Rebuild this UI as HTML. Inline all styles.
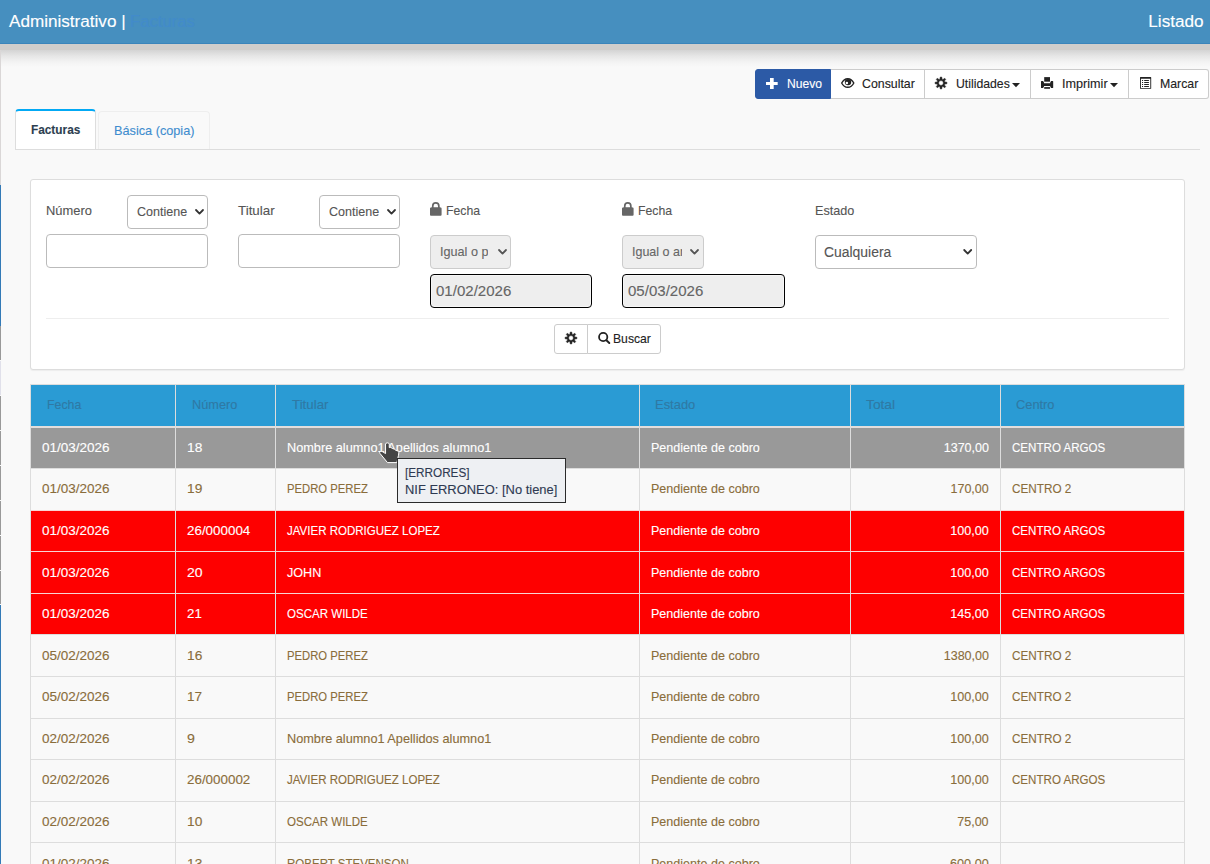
<!DOCTYPE html>
<html lang="es"><head>
<meta charset="utf-8">
<title>Administrativo | Facturas</title>
<style>
*{box-sizing:border-box;margin:0;padding:0}
html,body{width:1210px;height:864px;overflow:hidden}
body{font-family:"Liberation Sans",sans-serif;font-size:13px;color:#333;background:#f9f9f9;position:relative}
.a{position:absolute}
.t{position:absolute;white-space:nowrap;-webkit-text-stroke:0.12px currentColor}
svg{position:absolute;overflow:visible}
#topbar{left:0;top:0;width:1210px;height:44px;background:#468fbf;border-bottom:1px solid #3a84ba}
#strip{left:0;top:44px;width:1210px;height:6px;background:#cfcdcb}
#fade{left:1px;top:50px;width:1209px;height:17px;background:linear-gradient(#d4d4d4,#e6e6e6 35%,#f3f3f3 70%,#f9f9f9)}
.btn{position:absolute;top:69px;height:30px;background:#fff;border:1px solid #ccc;border-left:none}
#b1{left:755px;width:76px;background:#2c5aa6;border:1px solid #2c5aa6;border-radius:3px 0 0 3px}
#b2{left:831px;width:94px}
#b3{left:925px;width:106px}
#b4{left:1031px;width:98px}
#b5{left:1129px;width:80px;border-radius:0 3px 3px 0}
#tabline{left:15px;top:149px;width:1185px;height:1px;background:#ddd}
#tab1{left:15px;top:109px;width:81px;height:41px;background:#fff;border:1px solid #ddd;border-top:2px solid #03a9f4;border-bottom:1px solid #ddd;border-radius:4px 4px 0 0}
#tab2{left:98px;top:111px;width:112px;height:38px;border:1px solid #eee;border-bottom:none;border-radius:4px 4px 0 0}
#panel{left:30px;top:179px;width:1155px;height:191px;background:#fff;border:1px solid #ddd;border-radius:3px;box-shadow:0 1px 1px rgba(0,0,0,.05)}
.inp{position:absolute;height:34px;background:#fff;border:1px solid #bbb;border-radius:4px}
.dis{background:#eee;border-color:#ccc}
.foc{border:1px solid #000;background:#eee;box-shadow:inset 0 0 0 1px #f6f6f6}
#sep{left:46px;top:318px;width:1123px;height:1px;background:#eee}
#bg1{left:554px;top:324px;width:34px;height:30px;background:#fff;border:1px solid #ccc;border-radius:3px 0 0 3px}
#bg2{left:587px;top:324px;width:74px;height:30px;background:#fff;border:1px solid #ccc;border-radius:0 3px 3px 0}
#thead{left:30px;top:384px;width:1155px;height:44px;background:#2a9bd4;border-top:1px solid #ddd;border-bottom:2px solid #e2dedc}
.row{position:absolute;left:30px;width:1155px;border-top:1px solid #ddd;background:#f9f9f9}
.row.g{background:#999;border-top-color:#e2dedc}
.row.r{background:#fe0000;border-top-color:#f9d4d4}
.row.w{background:#f9f9f9}
.vl{position:absolute;top:384px;width:1px;height:480px;background:#ddd}
#tip{left:397px;top:458px;width:169px;height:45px;background:#eef0f3;border:1px solid #2b2b2b}
</style>
</head>
<body>
<div class="a" style="left:0;top:50px;width:1px;height:135px;background:#dad7d7"></div>
<div class="a" style="left:0;top:185px;width:1px;height:141px;background:#337ab7"></div>
<div class="a" style="left:0;top:326px;width:1px;height:34px;background:#999"></div>
<div class="a" style="left:0;top:361px;width:1px;height:34px;background:#e0e0ea"></div>
<div class="a" style="left:0;top:396px;width:1px;height:34px;background:#999"></div>
<div class="a" style="left:0;top:431px;width:1px;height:34px;background:#999"></div>
<div class="a" style="left:0;top:466px;width:1px;height:34px;background:#999"></div>
<div class="a" style="left:0;top:501px;width:1px;height:34px;background:#999"></div>
<div class="a" style="left:0;top:536px;width:1px;height:34px;background:#999"></div>
<div class="a" style="left:0;top:571px;width:1px;height:33px;background:#999"></div>
<div class="a" style="left:0;top:605px;width:1px;height:259px;background:#337ab7"></div>
<div id="topbar" class="a"></div><div id="strip" class="a"></div><div id="fade" class="a"></div>
<span class="t" style="left: 9.35px; top: 14.45px; font-size: 16px; line-height: 16px; color: rgb(255, 255, 255); font-weight: normal; transform-origin: 0px 50%; transform: scaleX(1.069);">Administrativo |</span>
<span class="t" style="left: 129.95px; top: 14.45px; font-size: 16px; line-height: 16px; color: rgb(66, 139, 202); font-weight: normal; transform-origin: 0px 50%; transform: scaleX(1.041);">Facturas</span>
<span class="t" style="right: 6.35px; top: 14.45px; font-size: 16px; line-height: 16px; color: rgb(255, 255, 255); font-weight: normal; transform-origin: 100% 50%; transform: scaleX(1.0718);">Listado</span>
<div id="b1" class="btn"></div><div id="b2" class="btn"></div><div id="b3" class="btn"></div><div id="b4" class="btn"></div><div id="b5" class="btn"></div>
<span class="t" style="left: 786.55px; top: 77px; font-size: 13px; line-height: 13px; color: rgb(255, 255, 255); font-weight: normal; transform-origin: 0px 50%; transform: scaleX(0.9314);">Nuevo</span>
<span class="t" style="left: 862.35px; top: 77px; font-size: 13px; line-height: 13px; color: rgb(34, 34, 34); font-weight: normal; transform-origin: 0px 50%; transform: scaleX(0.9489);">Consultar</span>
<span class="t" style="left: 955.85px; top: 77px; font-size: 13px; line-height: 13px; color: rgb(34, 34, 34); font-weight: normal; transform-origin: 0px 50%; transform: scaleX(0.9423);">Utilidades</span>
<span class="t" style="left: 1062.15px; top: 77px; font-size: 13px; line-height: 13px; color: rgb(34, 34, 34); font-weight: normal; transform-origin: 0px 50%; transform: scaleX(0.9715);">Imprimir</span>
<span class="t" style="left: 1160.15px; top: 77px; font-size: 13px; line-height: 13px; color: rgb(34, 34, 34); font-weight: normal; transform-origin: 0px 50%; transform: scaleX(0.9468);">Marcar</span>
<div id="tabline" class="a"></div><div id="tab1" class="a"></div><div id="tab2" class="a"></div>
<span class="t" style="left: 30.55px; top: 123px; font-size: 13px; line-height: 13px; color: rgb(44, 62, 80); font-weight: bold; transform-origin: 0px 50%; transform: scaleX(0.9095);">Facturas</span>
<span class="t" style="left: 113.85px; top: 123.6px; font-size: 13px; line-height: 13px; color: rgb(63, 141, 207); font-weight: normal; transform-origin: 0px 50%; transform: scaleX(0.9772);">Básica (copia)</span>
<div id="panel" class="a"></div>
<span class="t" style="left: 45.65px; top: 204.3px; font-size: 13px; line-height: 13px; color: rgb(85, 85, 85); font-weight: normal; transform-origin: 0px 50%; transform: scaleX(0.9924);">Número</span>
<div class="inp" style="left:127px;top:195px;width:81px"></div>
<span class="t" style="left: 136.75px; top: 205px; font-size: 13px; line-height: 13px; color: rgb(85, 85, 85); font-weight: normal; transform-origin: 0px 50%; transform: scaleX(0.9626);">Contiene</span>
<svg style="left:194.5px;top:209.3px" width="9" height="6" viewBox="0 0 9 6"><path d="M1 1 L4.5 4.6 L8 1" fill="none" stroke="#333" stroke-width="1.8" stroke-linecap="round" stroke-linejoin="round"></path></svg>
<div class="inp" style="left:46px;top:234px;width:162px"></div>
<span class="t" style="left: 237.65px; top: 204.3px; font-size: 13px; line-height: 13px; color: rgb(85, 85, 85); font-weight: normal; transform-origin: 0px 50%; transform: scaleX(1.0269);">Titular</span>
<div class="inp" style="left:319px;top:195px;width:81px"></div>
<span class="t" style="left: 328.75px; top: 205px; font-size: 13px; line-height: 13px; color: rgb(85, 85, 85); font-weight: normal; transform-origin: 0px 50%; transform: scaleX(0.9626);">Contiene</span>
<svg style="left:386.5px;top:209.3px" width="9" height="6" viewBox="0 0 9 6"><path d="M1 1 L4.5 4.6 L8 1" fill="none" stroke="#333" stroke-width="1.8" stroke-linecap="round" stroke-linejoin="round"></path></svg>
<div class="inp" style="left:238px;top:234px;width:162px"></div>
<svg style="left:430.2px;top:203.1px" width="11.6" height="12.7" viewBox="0 0 11.6 12.7"><path d="M0.9 4.6L1.9 4.2H9.7L10.7 4.6a.9 .9 0 0 1 .9 .9v6.3a.9 .9 0 0 1-.9 .9H0.9a.9 .9 0 0 1-.9-.9V5.5a.9 .9 0 0 1 .9-.9z" fill="#666"></path><path d="M2.75 5V2.9a3.05 3.05 0 0 1 6.1 0V5" fill="none" stroke="#666" stroke-width="1.7"></path></svg>
<span class="t" style="left: 445.75px; top: 204.3px; font-size: 13px; line-height: 13px; color: rgb(85, 85, 85); font-weight: normal; transform-origin: 0px 50%; transform: scaleX(0.9435);">Fecha</span>
<div class="inp dis" style="left:430px;top:235px;width:81px"></div>
<div class="a" style="left:438px;top:240px;width:49.9px;height:24px;overflow:hidden"><span class="t" style="left: 1.95px; top: 5.3px; font-size: 13px; line-height: 13px; color: rgb(102, 102, 102); font-weight: normal; transform-origin: 0px 50%; transform: scaleX(0.9724);">Igual o p</span></div>
<svg style="left:497.6px;top:249.4px" width="9" height="6" viewBox="0 0 9 6"><path d="M1 1 L4.5 4.6 L8 1" fill="none" stroke="#555" stroke-width="1.8" stroke-linecap="round" stroke-linejoin="round"></path></svg>
<div class="inp foc" style="left:430px;top:274px;width:162px"></div>
<span class="t" style="left: 435.95px; top: 284.15px; font-size: 14px; line-height: 14px; color: rgb(102, 102, 102); font-weight: normal; transform-origin: 0px 50%; transform: scaleX(1.0745);">01/02/2026</span>
<svg style="left:622.4px;top:203.1px" width="11.6" height="12.7" viewBox="0 0 11.6 12.7"><path d="M0.9 4.6L1.9 4.2H9.7L10.7 4.6a.9 .9 0 0 1 .9 .9v6.3a.9 .9 0 0 1-.9 .9H0.9a.9 .9 0 0 1-.9-.9V5.5a.9 .9 0 0 1 .9-.9z" fill="#666"></path><path d="M2.75 5V2.9a3.05 3.05 0 0 1 6.1 0V5" fill="none" stroke="#666" stroke-width="1.7"></path></svg>
<span class="t" style="left: 637.75px; top: 204.3px; font-size: 13px; line-height: 13px; color: rgb(85, 85, 85); font-weight: normal; transform-origin: 0px 50%; transform: scaleX(0.9435);">Fecha</span>
<div class="inp dis" style="left:622px;top:235px;width:82px"></div>
<div class="a" style="left:630px;top:240px;width:52.0px;height:24px;overflow:hidden"><span class="t" style="left: 1.95px; top: 5.3px; font-size: 13px; line-height: 13px; color: rgb(102, 102, 102); font-weight: normal; transform-origin: 0px 50%; transform: scaleX(0.9613);">Igual o an</span></div>
<svg style="left:689.6px;top:249.4px" width="9" height="6" viewBox="0 0 9 6"><path d="M1 1 L4.5 4.6 L8 1" fill="none" stroke="#555" stroke-width="1.8" stroke-linecap="round" stroke-linejoin="round"></path></svg>
<div class="inp foc" style="left:622px;top:274px;width:163px"></div>
<span class="t" style="left: 627.95px; top: 284.15px; font-size: 14px; line-height: 14px; color: rgb(102, 102, 102); font-weight: normal; transform-origin: 0px 50%; transform: scaleX(1.0745);">05/03/2026</span>
<span class="t" style="left: 814.65px; top: 204.3px; font-size: 13px; line-height: 13px; color: rgb(85, 85, 85); font-weight: normal; transform-origin: 0px 50%; transform: scaleX(0.9707);">Estado</span>
<div class="inp" style="left:815px;top:235px;width:162px"></div>
<span class="t" style="left: 824.15px; top: 244.65px; font-size: 14px; line-height: 14px; color: rgb(85, 85, 85); font-weight: normal; transform-origin: 0px 50%; transform: scaleX(0.9938);">Cualquiera</span>
<svg style="left:963.3px;top:249.3px" width="9.4" height="6" viewBox="0 0 9 6"><path d="M1 1 L4.5 4.6 L8 1" fill="none" stroke="#333" stroke-width="1.8" stroke-linecap="round" stroke-linejoin="round"></path></svg>
<div id="sep" class="a"></div><div id="bg1" class="a"></div><div id="bg2" class="a"></div>
<span class="t" style="left: 612.75px; top: 332px; font-size: 13px; line-height: 13px; color: rgb(34, 34, 34); font-weight: normal; transform-origin: 0px 50%; transform: scaleX(0.9365);">Buscar</span>
<div id="thead" class="a"></div>
<span class="t" style="left: 46.55px; top: 398px; font-size: 13px; line-height: 13px; color: rgb(47, 121, 164); font-weight: normal; transform-origin: 0px 50%; transform: scaleX(0.9491);">Fecha</span>
<span class="t" style="left: 191.55px; top: 398px; font-size: 13px; line-height: 13px; color: rgb(47, 121, 164); font-weight: normal; transform-origin: 0px 50%; transform: scaleX(0.9795);">Número</span>
<span class="t" style="left: 291.75px; top: 398px; font-size: 13px; line-height: 13px; color: rgb(47, 121, 164); font-weight: normal; transform-origin: 0px 50%; transform: scaleX(1.0241);">Titular</span>
<span class="t" style="left: 655.35px; top: 398px; font-size: 13px; line-height: 13px; color: rgb(47, 121, 164); font-weight: normal; transform-origin: 0px 50%; transform: scaleX(0.9954);">Estado</span>
<span class="t" style="left: 866.35px; top: 398px; font-size: 13px; line-height: 13px; color: rgb(47, 121, 164); font-weight: normal; transform-origin: 0px 50%; transform: scaleX(1.0594);">Total</span>
<span class="t" style="left: 1015.85px; top: 398px; font-size: 13px; line-height: 13px; color: rgb(47, 121, 164); font-weight: normal; transform-origin: 0px 50%; transform: scaleX(0.9864);">Centro</span>
<div class="row g" style="top:427px;height:41px"></div>
<span class="t" style="left: 42.15px; top: 440.9px; font-size: 13px; line-height: 13px; color: rgb(255, 255, 255); font-weight: normal; transform-origin: 0px 50%; transform: scaleX(1.0388);">01/03/2026</span>
<span class="t" style="left: 186.65px; top: 440.9px; font-size: 13px; line-height: 13px; color: rgb(255, 255, 255); font-weight: normal; transform-origin: 0px 50%; transform: scaleX(1.0575);">18</span>
<span class="t" style="left: 286.75px; top: 440.9px; font-size: 13px; line-height: 13px; color: rgb(255, 255, 255); font-weight: normal; transform-origin: 0px 50%; transform: scaleX(0.9782);">Nombre alumno1 Apellidos alumno1</span>
<span class="t" style="left: 650.85px; top: 440.9px; font-size: 13px; line-height: 13px; color: rgb(255, 255, 255); font-weight: normal; transform-origin: 0px 50%; transform: scaleX(0.9648);">Pendiente de cobro</span>
<span class="t" style="right: 221.15px; top: 440.9px; font-size: 13px; line-height: 13px; color: rgb(255, 255, 255); font-weight: normal; transform-origin: 100% 50%; transform: scaleX(0.9638);">1370,00</span>
<span class="t" style="left: 1011.55px; top: 440.9px; font-size: 13px; line-height: 13px; color: rgb(255, 255, 255); font-weight: normal; transform-origin: 0px 50%; transform: scaleX(0.8907);">CENTRO ARGOS</span>
<div class="row w" style="top:468px;height:42px"></div>
<span class="t" style="left: 42.15px; top: 482.47px; font-size: 13px; line-height: 13px; color: rgb(138, 109, 59); font-weight: normal; transform-origin: 0px 50%; transform: scaleX(1.0388);">01/03/2026</span>
<span class="t" style="left: 186.65px; top: 482.47px; font-size: 13px; line-height: 13px; color: rgb(138, 109, 59); font-weight: normal; transform-origin: 0px 50%; transform: scaleX(1.0575);">19</span>
<span class="t" style="left: 286.75px; top: 482.47px; font-size: 13px; line-height: 13px; color: rgb(138, 109, 59); font-weight: normal; transform-origin: 0px 50%; transform: scaleX(0.8671);">PEDRO PEREZ</span>
<span class="t" style="left: 650.85px; top: 482.47px; font-size: 13px; line-height: 13px; color: rgb(138, 109, 59); font-weight: normal; transform-origin: 0px 50%; transform: scaleX(0.9648);">Pendiente de cobro</span>
<span class="t" style="right: 221.15px; top: 482.47px; font-size: 13px; line-height: 13px; color: rgb(138, 109, 59); font-weight: normal; transform-origin: 100% 50%; transform: scaleX(0.9631);">170,00</span>
<span class="t" style="left: 1011.55px; top: 482.47px; font-size: 13px; line-height: 13px; color: rgb(138, 109, 59); font-weight: normal; transform-origin: 0px 50%; transform: scaleX(0.9021);">CENTRO 2</span>
<div class="row r" style="top:510px;height:41px"></div>
<span class="t" style="left: 42.15px; top: 524.04px; font-size: 13px; line-height: 13px; color: rgb(255, 255, 255); font-weight: normal; transform-origin: 0px 50%; transform: scaleX(1.0388);">01/03/2026</span>
<span class="t" style="left: 186.65px; top: 524.04px; font-size: 13px; line-height: 13px; color: rgb(255, 255, 255); font-weight: normal; transform-origin: 0px 50%; transform: scaleX(1.0301);">26/000004</span>
<span class="t" style="left: 286.75px; top: 524.04px; font-size: 13px; line-height: 13px; color: rgb(255, 255, 255); font-weight: normal; transform-origin: 0px 50%; transform: scaleX(0.8863);">JAVIER RODRIGUEZ LOPEZ</span>
<span class="t" style="left: 650.85px; top: 524.04px; font-size: 13px; line-height: 13px; color: rgb(255, 255, 255); font-weight: normal; transform-origin: 0px 50%; transform: scaleX(0.9648);">Pendiente de cobro</span>
<span class="t" style="right: 221.15px; top: 524.04px; font-size: 13px; line-height: 13px; color: rgb(255, 255, 255); font-weight: normal; transform-origin: 100% 50%; transform: scaleX(0.9707);">100,00</span>
<span class="t" style="left: 1011.55px; top: 524.04px; font-size: 13px; line-height: 13px; color: rgb(255, 255, 255); font-weight: normal; transform-origin: 0px 50%; transform: scaleX(0.8907);">CENTRO ARGOS</span>
<div class="row r" style="top:551px;height:42px"></div>
<span class="t" style="left: 42.15px; top: 565.61px; font-size: 13px; line-height: 13px; color: rgb(255, 255, 255); font-weight: normal; transform-origin: 0px 50%; transform: scaleX(1.0388);">01/03/2026</span>
<span class="t" style="left: 186.65px; top: 565.61px; font-size: 13px; line-height: 13px; color: rgb(255, 255, 255); font-weight: normal; transform-origin: 0px 50%; transform: scaleX(1.0782);">20</span>
<span class="t" style="left: 286.75px; top: 565.61px; font-size: 13px; line-height: 13px; color: rgb(255, 255, 255); font-weight: normal; transform-origin: 0px 50%; transform: scaleX(0.9692);">JOHN</span>
<span class="t" style="left: 650.85px; top: 565.61px; font-size: 13px; line-height: 13px; color: rgb(255, 255, 255); font-weight: normal; transform-origin: 0px 50%; transform: scaleX(0.9648);">Pendiente de cobro</span>
<span class="t" style="right: 221.15px; top: 565.61px; font-size: 13px; line-height: 13px; color: rgb(255, 255, 255); font-weight: normal; transform-origin: 100% 50%; transform: scaleX(0.9707);">100,00</span>
<span class="t" style="left: 1011.55px; top: 565.61px; font-size: 13px; line-height: 13px; color: rgb(255, 255, 255); font-weight: normal; transform-origin: 0px 50%; transform: scaleX(0.8907);">CENTRO ARGOS</span>
<div class="row r" style="top:593px;height:41px"></div>
<span class="t" style="left: 42.15px; top: 607.18px; font-size: 13px; line-height: 13px; color: rgb(255, 255, 255); font-weight: normal; transform-origin: 0px 50%; transform: scaleX(1.0388);">01/03/2026</span>
<span class="t" style="left: 186.65px; top: 607.18px; font-size: 13px; line-height: 13px; color: rgb(255, 255, 255); font-weight: normal; transform-origin: 0px 50%; transform: scaleX(1.0229);">21</span>
<span class="t" style="left: 286.75px; top: 607.18px; font-size: 13px; line-height: 13px; color: rgb(255, 255, 255); font-weight: normal; transform-origin: 0px 50%; transform: scaleX(0.8878);">OSCAR WILDE</span>
<span class="t" style="left: 650.85px; top: 607.18px; font-size: 13px; line-height: 13px; color: rgb(255, 255, 255); font-weight: normal; transform-origin: 0px 50%; transform: scaleX(0.9648);">Pendiente de cobro</span>
<span class="t" style="right: 221.15px; top: 607.18px; font-size: 13px; line-height: 13px; color: rgb(255, 255, 255); font-weight: normal; transform-origin: 100% 50%; transform: scaleX(0.9707);">145,00</span>
<span class="t" style="left: 1011.55px; top: 607.18px; font-size: 13px; line-height: 13px; color: rgb(255, 255, 255); font-weight: normal; transform-origin: 0px 50%; transform: scaleX(0.8907);">CENTRO ARGOS</span>
<div class="row " style="top:634px;height:42px"></div>
<span class="t" style="left: 42.15px; top: 648.75px; font-size: 13px; line-height: 13px; color: rgb(138, 109, 59); font-weight: normal; transform-origin: 0px 50%; transform: scaleX(1.0388);">05/02/2026</span>
<span class="t" style="left: 186.65px; top: 648.75px; font-size: 13px; line-height: 13px; color: rgb(138, 109, 59); font-weight: normal; transform-origin: 0px 50%; transform: scaleX(1.0575);">16</span>
<span class="t" style="left: 286.75px; top: 648.75px; font-size: 13px; line-height: 13px; color: rgb(138, 109, 59); font-weight: normal; transform-origin: 0px 50%; transform: scaleX(0.8671);">PEDRO PEREZ</span>
<span class="t" style="left: 650.85px; top: 648.75px; font-size: 13px; line-height: 13px; color: rgb(138, 109, 59); font-weight: normal; transform-origin: 0px 50%; transform: scaleX(0.9648);">Pendiente de cobro</span>
<span class="t" style="right: 221.15px; top: 648.75px; font-size: 13px; line-height: 13px; color: rgb(138, 109, 59); font-weight: normal; transform-origin: 100% 50%; transform: scaleX(0.9638);">1380,00</span>
<span class="t" style="left: 1011.55px; top: 648.75px; font-size: 13px; line-height: 13px; color: rgb(138, 109, 59); font-weight: normal; transform-origin: 0px 50%; transform: scaleX(0.9021);">CENTRO 2</span>
<div class="row " style="top:676px;height:42px"></div>
<span class="t" style="left: 42.15px; top: 690.33px; font-size: 13px; line-height: 13px; color: rgb(138, 109, 59); font-weight: normal; transform-origin: 0px 50%; transform: scaleX(1.0388);">05/02/2026</span>
<span class="t" style="left: 186.65px; top: 690.33px; font-size: 13px; line-height: 13px; color: rgb(138, 109, 59); font-weight: normal; transform-origin: 0px 50%; transform: scaleX(1.0436);">17</span>
<span class="t" style="left: 286.75px; top: 690.33px; font-size: 13px; line-height: 13px; color: rgb(138, 109, 59); font-weight: normal; transform-origin: 0px 50%; transform: scaleX(0.8671);">PEDRO PEREZ</span>
<span class="t" style="left: 650.85px; top: 690.33px; font-size: 13px; line-height: 13px; color: rgb(138, 109, 59); font-weight: normal; transform-origin: 0px 50%; transform: scaleX(0.9648);">Pendiente de cobro</span>
<span class="t" style="right: 221.15px; top: 690.33px; font-size: 13px; line-height: 13px; color: rgb(138, 109, 59); font-weight: normal; transform-origin: 100% 50%; transform: scaleX(0.9707);">100,00</span>
<span class="t" style="left: 1011.55px; top: 690.33px; font-size: 13px; line-height: 13px; color: rgb(138, 109, 59); font-weight: normal; transform-origin: 0px 50%; transform: scaleX(0.9021);">CENTRO 2</span>
<div class="row " style="top:718px;height:41px"></div>
<span class="t" style="left: 42.15px; top: 731.9px; font-size: 13px; line-height: 13px; color: rgb(138, 109, 59); font-weight: normal; transform-origin: 0px 50%; transform: scaleX(1.0388);">02/02/2026</span>
<span class="t" style="left: 186.65px; top: 731.9px; font-size: 13px; line-height: 13px; color: rgb(138, 109, 59); font-weight: normal; transform-origin: 0px 50%; transform: scaleX(1.092);">9</span>
<span class="t" style="left: 286.75px; top: 731.9px; font-size: 13px; line-height: 13px; color: rgb(138, 109, 59); font-weight: normal; transform-origin: 0px 50%; transform: scaleX(0.9782);">Nombre alumno1 Apellidos alumno1</span>
<span class="t" style="left: 650.85px; top: 731.9px; font-size: 13px; line-height: 13px; color: rgb(138, 109, 59); font-weight: normal; transform-origin: 0px 50%; transform: scaleX(0.9648);">Pendiente de cobro</span>
<span class="t" style="right: 221.15px; top: 731.9px; font-size: 13px; line-height: 13px; color: rgb(138, 109, 59); font-weight: normal; transform-origin: 100% 50%; transform: scaleX(0.9707);">100,00</span>
<span class="t" style="left: 1011.55px; top: 731.9px; font-size: 13px; line-height: 13px; color: rgb(138, 109, 59); font-weight: normal; transform-origin: 0px 50%; transform: scaleX(0.9021);">CENTRO 2</span>
<div class="row " style="top:759px;height:42px"></div>
<span class="t" style="left: 42.15px; top: 773.47px; font-size: 13px; line-height: 13px; color: rgb(138, 109, 59); font-weight: normal; transform-origin: 0px 50%; transform: scaleX(1.0388);">02/02/2026</span>
<span class="t" style="left: 186.65px; top: 773.47px; font-size: 13px; line-height: 13px; color: rgb(138, 109, 59); font-weight: normal; transform-origin: 0px 50%; transform: scaleX(1.0301);">26/000002</span>
<span class="t" style="left: 286.75px; top: 773.47px; font-size: 13px; line-height: 13px; color: rgb(138, 109, 59); font-weight: normal; transform-origin: 0px 50%; transform: scaleX(0.8863);">JAVIER RODRIGUEZ LOPEZ</span>
<span class="t" style="left: 650.85px; top: 773.47px; font-size: 13px; line-height: 13px; color: rgb(138, 109, 59); font-weight: normal; transform-origin: 0px 50%; transform: scaleX(0.9648);">Pendiente de cobro</span>
<span class="t" style="right: 221.15px; top: 773.47px; font-size: 13px; line-height: 13px; color: rgb(138, 109, 59); font-weight: normal; transform-origin: 100% 50%; transform: scaleX(0.9707);">100,00</span>
<span class="t" style="left: 1011.55px; top: 773.47px; font-size: 13px; line-height: 13px; color: rgb(138, 109, 59); font-weight: normal; transform-origin: 0px 50%; transform: scaleX(0.8907);">CENTRO ARGOS</span>
<div class="row " style="top:801px;height:41px"></div>
<span class="t" style="left: 42.15px; top: 815.04px; font-size: 13px; line-height: 13px; color: rgb(138, 109, 59); font-weight: normal; transform-origin: 0px 50%; transform: scaleX(1.0388);">02/02/2026</span>
<span class="t" style="left: 186.65px; top: 815.04px; font-size: 13px; line-height: 13px; color: rgb(138, 109, 59); font-weight: normal; transform-origin: 0px 50%; transform: scaleX(1.0575);">10</span>
<span class="t" style="left: 286.75px; top: 815.04px; font-size: 13px; line-height: 13px; color: rgb(138, 109, 59); font-weight: normal; transform-origin: 0px 50%; transform: scaleX(0.8878);">OSCAR WILDE</span>
<span class="t" style="left: 650.85px; top: 815.04px; font-size: 13px; line-height: 13px; color: rgb(138, 109, 59); font-weight: normal; transform-origin: 0px 50%; transform: scaleX(0.9648);">Pendiente de cobro</span>
<span class="t" style="right: 221.15px; top: 815.04px; font-size: 13px; line-height: 13px; color: rgb(138, 109, 59); font-weight: normal; transform-origin: 100% 50%; transform: scaleX(0.9617);">75,00</span>
<div class="row " style="top:842px;height:42px"></div>
<span class="t" style="left: 42.15px; top: 856.61px; font-size: 13px; line-height: 13px; color: rgb(138, 109, 59); font-weight: normal; transform-origin: 0px 50%; transform: scaleX(1.0388);">01/02/2026</span>
<span class="t" style="left: 186.65px; top: 856.61px; font-size: 13px; line-height: 13px; color: rgb(138, 109, 59); font-weight: normal; transform-origin: 0px 50%; transform: scaleX(1.0575);">13</span>
<span class="t" style="left: 286.75px; top: 856.61px; font-size: 13px; line-height: 13px; color: rgb(138, 109, 59); font-weight: normal; transform-origin: 0px 50%; transform: scaleX(0.8858);">ROBERT STEVENSON</span>
<span class="t" style="left: 650.85px; top: 856.61px; font-size: 13px; line-height: 13px; color: rgb(138, 109, 59); font-weight: normal; transform-origin: 0px 50%; transform: scaleX(0.9648);">Pendiente de cobro</span>
<span class="t" style="right: 221.15px; top: 856.61px; font-size: 13px; line-height: 13px; color: rgb(138, 109, 59); font-weight: normal; transform-origin: 100% 50%; transform: scaleX(0.9757);">600,00</span>
<div class="vl" style="left:30px"></div>
<div class="vl" style="left:175px"></div>
<div class="vl" style="left:275px"></div>
<div class="vl" style="left:639px"></div>
<div class="vl" style="left:850px"></div>
<div class="vl" style="left:1000px"></div>
<div class="vl" style="left:1184px"></div>
<svg style="left:765.5px;top:78px" width="11.7" height="11" viewBox="0 0 11.7 11"><path d="M4 0h3.7v3.9h4v3.1h-4v4H4V7H0V3.9h4z" fill="#fff"></path></svg>
<svg style="left:840.9px;top:78px" width="13.5" height="10" viewBox="0 0 13.5 10"><path d="M0.7 5C2.2 2 4.4 0.7 6.75 0.7S11.3 2 12.8 5C11.3 8 9.1 9.3 6.75 9.3S2.2 8 0.7 5Z" fill="#fff" stroke="#222" stroke-width="1.4"></path><circle cx="7" cy="4.1" r="3.2" fill="#222"></circle><circle cx="5.9" cy="4.9" r="1.25" fill="#fff"></circle></svg>
<svg style="left:935.1px;top:77.0px" width="12" height="12" viewBox="0 0 12 12"><path d="M4.93 2.14 L5.28 0.04 L6.72 0.04 L7.07 2.14 L7.97 2.52 L9.70 1.28 L10.72 2.30 L9.48 4.03 L9.86 4.93 L11.96 5.28 L11.96 6.72 L9.86 7.07 L9.48 7.97 L10.72 9.70 L9.70 10.72 L7.97 9.48 L7.07 9.86 L6.72 11.96 L5.28 11.96 L4.93 9.86 L4.03 9.48 L2.30 10.72 L1.28 9.70 L2.52 7.97 L2.14 7.07 L0.04 6.72 L0.04 5.28 L2.14 4.93 L2.52 4.03 L1.28 2.30 L2.30 1.28 L4.03 2.52Z M6 3.6 A2.4 2.4 0 1 0 6 8.4 A2.4 2.4 0 1 0 6 3.6Z" fill="#222" fill-rule="evenodd" stroke="#222" stroke-width="0.5" stroke-linejoin="round"></path></svg>
<svg style="left:1041px;top:77px" width="12.2" height="12" viewBox="0 0 12.2 12"><path d="M3.2 0.1h5.8v4.6H3.2z" fill="#222"></path><path d="M0.5 4H2.1L3 5.4V6.2H9.2V5.4L10.1 4H11.7a.5 .5 0 0 1 .5 .5V10.4a.5 .5 0 0 1-.5 .5H10.1L9.2 9.6V8.9H3V9.6L2.1 10.9H0.5a.5 .5 0 0 1-.5-.5V4.5A.5 .5 0 0 1 .5 4z" fill="#222"></path><path d="M3.2 10.1h5.8v1.7H3.2z" fill="#222"></path></svg>
<svg style="left:1140px;top:77px" width="11.2" height="11.8" viewBox="0 0 11.2 11.8"><path d="M0.5 0h10.2a.5 .5 0 0 1 .5 .5v10.8a.5 .5 0 0 1-.5 .5H.5a.5 .5 0 0 1-.5-.5V.5A.5 .5 0 0 1 .5 0z M0.9 1.8v9.1h9.4V1.8z" fill="#222" fill-rule="evenodd"></path><path d="M2 2.9h1.1v1H2z M4.2 2.9h4.7v1H4.2z" fill="#222"></path><path d="M2 4.9h1.1v1H2z M4.2 4.9h4.7v1H4.2z" fill="#222"></path><path d="M2 7.0h1.1v1H2z M4.2 7.0h4.7v1H4.2z" fill="#222"></path><path d="M2 8.9h1.1v1H2z M4.2 8.9h4.7v1H4.2z" fill="#222"></path></svg>
<svg style="left:1012px;top:83px" width="8" height="4" viewBox="0 0 8 4"><path d="M0 0H8L4 4.2Z" fill="#222"></path></svg>
<svg style="left:1110.2px;top:83px" width="8" height="4" viewBox="0 0 8 4"><path d="M0 0H8L4 4.2Z" fill="#222"></path></svg>
<svg style="left:565px;top:332px" width="12" height="12" viewBox="0 0 12 12"><path d="M4.93 2.14 L5.28 0.04 L6.72 0.04 L7.07 2.14 L7.97 2.52 L9.70 1.28 L10.72 2.30 L9.48 4.03 L9.86 4.93 L11.96 5.28 L11.96 6.72 L9.86 7.07 L9.48 7.97 L10.72 9.70 L9.70 10.72 L7.97 9.48 L7.07 9.86 L6.72 11.96 L5.28 11.96 L4.93 9.86 L4.03 9.48 L2.30 10.72 L1.28 9.70 L2.52 7.97 L2.14 7.07 L0.04 6.72 L0.04 5.28 L2.14 4.93 L2.52 4.03 L1.28 2.30 L2.30 1.28 L4.03 2.52Z M6 3.6 A2.4 2.4 0 1 0 6 8.4 A2.4 2.4 0 1 0 6 3.6Z" fill="#222" fill-rule="evenodd" stroke="#222" stroke-width="0.5" stroke-linejoin="round"></path></svg>
<svg style="left:597.7px;top:332px" width="12.4" height="12.2" viewBox="0 0 12.4 12.2"><circle cx="5.2" cy="5" r="4.15" fill="none" stroke="#222" stroke-width="1.8"></circle><path d="M8.4 8.3L11.3 11" stroke="#222" stroke-width="2" stroke-linecap="round"></path></svg>
<svg style="left:379px;top:441.5px" width="21" height="22" viewBox="0 0 21 22"><path d="M6.55 2 C6.55 0.5 10.25 0.5 10.25 2 L10.25 5.6 L11.8 5.4 L13.4 6.5 L15.3 7.1 L16.8 8.3 L18.5 8.9 C19.5 9.3 19.9 10 19.8 11 L19.5 13.2 L17.9 20.6 L8.5 20.6 L0.9 11.3 C0.3 10.2 1.1 9.3 2.3 9.5 L3.7 9.8 L6.55 11.6 Z" fill="#444" stroke="#fff" stroke-width="1" stroke-linejoin="round"></path></svg>
<div id="tip" class="a"></div>
<span class="t" style="left: 405.15px; top: 465.5px; font-size: 13px; line-height: 13px; color: rgb(46, 58, 82); font-weight: normal; transform-origin: 0px 50%; transform: scaleX(0.9019);">[ERRORES]</span>
<span class="t" style="left: 405.15px; top: 483.3px; font-size: 13px; line-height: 13px; color: rgb(46, 58, 82); font-weight: normal; transform-origin: 0px 50%; transform: scaleX(0.9944);">NIF ERRONEO: [No tiene]</span>


</body></html>
